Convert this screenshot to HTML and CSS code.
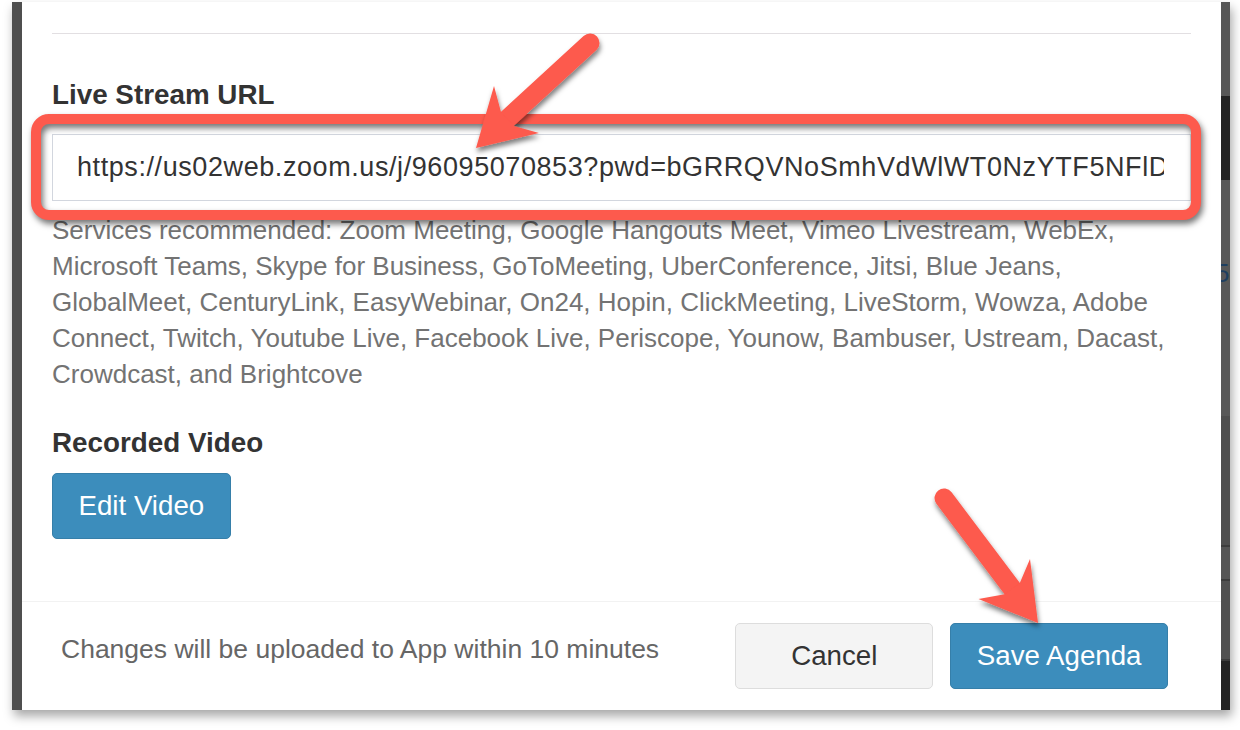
FILE: index.html
```html
<!DOCTYPE html>
<html>
<head>
<meta charset="utf-8">
<title>Edit Agenda</title>
<link rel="stylesheet" href="styles.css">
</head>
<body>
<div class="shot">
  <div class="bg-left"></div>
  <div class="modal">
    <div class="modal-body">
      <hr class="divider">
      <div class="url-group">
        <label class="label" for="stream">Live Stream URL</label>
        <div class="input-wrap">
          <input id="stream" class="form-control" type="text" value="https://us02web.zoom.us/j/96095070853?pwd=bGRRQVNoSmhVdWlWT0NzYTF5NFlDQT09">
          <div class="highlight"></div>
        </div>
        <p class="help">Services recommended: Zoom Meeting, Google Hangouts Meet, Vimeo Livestream, WebEx,<br>Microsoft Teams, Skype for Business, GoToMeeting, UberConference, Jitsi, Blue Jeans,<br>GlobalMeet, CenturyLink, EasyWebinar, On24, Hopin, ClickMeeting, LiveStorm, Wowza, Adobe<br>Connect, Twitch, Youtube Live, Facebook Live, Periscope, Younow, Bambuser, Ustream, Dacast,<br>Crowdcast, and Brightcove</p>
      </div>
      <div class="video-group">
        <span class="label">Recorded Video</span>
        <button class="btn btn-primary">Edit Video</button>
      </div>
    </div>
    <div class="modal-footer">
      <p class="note">Changes will be uploaded to App within 10 minutes</p>
      <div class="actions">
        <button class="btn btn-default btn-cancel">Cancel</button>
        <button class="btn btn-primary">Save Agenda</button>
      </div>
    </div>
  </div>
  <div class="bg-right">
    <div class="seg seg-a"></div>
    <div class="seg seg-b"></div>
    <div class="seg seg-c"><span class="peek">5I</span></div>
    <div class="seg seg-d"></div>
    <div class="seg seg-e"></div>
    <div class="seg seg-f"></div>
    <div class="seg seg-g"></div>
  </div>
</div>
<svg class="arrows" viewBox="0 0 1240 730" xmlns="http://www.w3.org/2000/svg">
  <defs>
    <filter id="sh" x="-30%" y="-30%" width="160%" height="160%">
      <feDropShadow dx="1" dy="4" stdDeviation="2.5" flood-color="#000" flood-opacity="0.5"/>
    </filter>
  </defs>
  <g filter="url(#sh)" fill="#fd5a4d">
    <line x1="590" y1="43" x2="505" y2="121" stroke="#fd5a4d" stroke-width="19" stroke-linecap="round"/>
    <polygon points="476,148 494,86 501,112 514,126 539,133"/>
  </g>
  <g filter="url(#sh)" fill="#fd5a4d">
    <line x1="944" y1="498" x2="1014" y2="591" stroke="#fd5a4d" stroke-width="19" stroke-linecap="round"/>
    <polygon points="1038,623 978.5,599 1004.6,594.3 1019.8,582.9 1030,559"/>
  </g>
</svg>
</body>
</html>
```

FILE: styles.css
```css
* { box-sizing: border-box; }
html, body { margin: 0; padding: 0; }
body {
  width: 1240px;
  height: 730px;
  background: #fff;
  font-family: "Liberation Sans", Arial, Helvetica, sans-serif;
  position: relative;
  overflow: hidden;
}
.shot {
  margin: 2px 0 0 12px;
  width: 1218px;
  height: 708px;
  display: flex;
  box-shadow: 2px 6px 10px rgba(0, 0, 0, 0.35);
}
.bg-left { width: 10px; background: #4f4f4f; }
.modal {
  width: 1199px;
  background: #fff;
  display: flex;
  flex-direction: column;
}
.bg-right {
  width: 9px;
  display: flex;
  flex-direction: column;
  overflow: hidden;
  background: #555;
}
.seg { flex: none; }
.seg-a { height: 94px; background: #575757; }
.seg-b { height: 84px; background: #232323; }
.seg-c { height: 236px; background: #585858; position: relative; overflow: hidden; }
.peek {
  display: block;
  margin: 78px 0 0 -6px;
  font-size: 26px;
  line-height: 30px;
  color: #1f3f60;
  white-space: nowrap;
}
.seg-d { height: 131px; background: #4e4e4e; border-bottom: 2px solid #3c3c3c; }
.seg-e { height: 34px; background: #555; border-bottom: 2px solid #3c3c3c; }
.seg-f { height: 80px; background: #505050; border-bottom: 2px solid #3c3c3c; }
.seg-g { flex: 1; background: #232323; }

.modal-body { padding: 31px 30px 62px; }
.divider { border: 0; border-top: 1px solid #e2dfe2; margin: 0; height: 0; }
.label {
  display: block;
  font-size: 27.8px;
  font-weight: bold;
  line-height: 36px;
  color: #333;
}
.url-group .label { margin: 43px 0 21px; }
.input-wrap { position: relative; }
.form-control {
  display: block;
  width: 100%;
  height: 67px;
  border: 1px solid #d2d6de;
  border-radius: 0;
  padding: 0 26px 0 24px;
  font: 27px "Liberation Sans", Arial, sans-serif;
  letter-spacing: 0.58px;
  color: #333;
  background: #fff;
  outline: none;
}
.highlight {
  position: absolute;
  left: -21px;
  top: -20px;
  right: -10px;
  bottom: -19px;
  border: 10px solid #fd5a4d;
  border-radius: 18px;
  filter: drop-shadow(2px 4px 3px rgba(0, 0, 0, 0.55));
}
.help {
  margin: 11px 0 0;
  font-size: 26px;
  line-height: 36px;
  color: #737373;
}
.video-group .label { margin: 33px 0 12px; }
.video-group .btn { display: block; }

.btn {
  font: 27.7px "Liberation Sans", Arial, sans-serif;
  line-height: 38px;
  height: 66px;
  padding: 0 25.5px;
  border: 1px solid;
  border-radius: 5px;
  cursor: pointer;
}
.btn-primary { background: #3c8dbc; border-color: #367fa9; color: #fff; }
.btn-default { background: #f4f4f4; border-color: #ddd; color: #333; }
.btn-cancel { width: 198px; }

.modal-footer {
  border-top: 1px solid #f2f2f2;
  padding: 21px 53px 21px 39px;
  display: flex;
  justify-content: space-between;
  align-items: flex-start;
}
.note {
  margin: 8px 0 0;
  font-size: 26.5px;
  line-height: 36px;
  color: #666;
}
.actions { display: flex; gap: 17px; }

.arrows {
  position: absolute;
  left: 0;
  top: 0;
  width: 1240px;
  height: 730px;
  pointer-events: none;
}
```
